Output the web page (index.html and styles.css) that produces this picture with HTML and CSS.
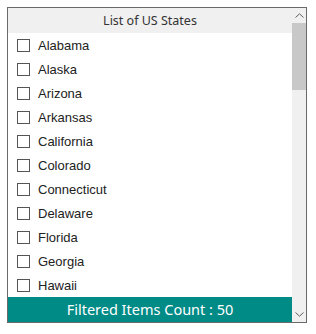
FILE: index.html
```html
<!DOCTYPE html>
<html lang="en">
<head>
    <meta charset="UTF-8">
    <title>List of US States</title>
    <link rel="stylesheet" href="styles.css">
</head>
<body>

<div class="listbox">
    <div class="list-main">
        <div class="list-header">List of US States</div>
        <div class="list-items">
            <label class="item"><span class="check"></span>Alabama</label>
            <label class="item"><span class="check"></span>Alaska</label>
            <label class="item"><span class="check"></span>Arizona</label>
            <label class="item"><span class="check"></span>Arkansas</label>
            <label class="item"><span class="check"></span>California</label>
            <label class="item"><span class="check"></span>Colorado</label>
            <label class="item"><span class="check"></span>Connecticut</label>
            <label class="item"><span class="check"></span>Delaware</label>
            <label class="item"><span class="check"></span>Florida</label>
            <label class="item"><span class="check"></span>Georgia</label>
            <label class="item"><span class="check"></span>Hawaii</label>
        </div>
        <div class="list-footer">Filtered Items Count : 50</div>
    </div>
    <div class="scrollbar">
        <div class="scroll-btn">
            <svg width="9" height="5" viewBox="0 0 9 5"><path d="M0.5 4.5 L4.5 0.8 L8.5 4.5" fill="none" stroke="#606060" stroke-width="1"/></svg>
        </div>
        <div class="scroll-track">
            <div class="scroll-thumb"></div>
        </div>
        <div class="scroll-btn">
            <svg width="9" height="5" viewBox="0 0 9 5"><path d="M0.5 0.5 L4.5 4.2 L8.5 0.5" fill="none" stroke="#606060" stroke-width="1"/></svg>
        </div>
    </div>
</div>

</body>
</html>
```

FILE: styles.css
```css
html,
body {
    margin: 0;
    background-color: #fff;
}
body {
    padding: 7px;
}
.listbox {
    display: flex;
    width: 298px;
    height: 314px;
    border: 1px solid #6a6a6a;
    background-color: #fff;
}
.list-main {
    flex: 1;
    display: flex;
    flex-direction: column;
}
.list-header {
    height: 25px;
    line-height: 25px;
    background-color: #f0f0f0;
    color: #333;
    text-align: center;
    font-family: "Noto Sans", sans-serif;
    font-size: 12.5px;
}
.list-items {
    flex: 1;
    overflow: hidden;
}
.item {
    display: flex;
    align-items: center;
    height: 24px;
    padding-left: 9px;
    font-family: "Liberation Sans", Arial, sans-serif;
    font-size: 13px;
    color: #222;
}
.check {
    width: 11px;
    height: 11px;
    border: 1px solid #555;
    margin-right: 8px;
    background-color: #fff;
}
.list-footer {
    height: 25px;
    line-height: 25px;
    background-color: #008b87;
    color: #fff;
    text-align: center;
    font-family: "Noto Sans", sans-serif;
    font-size: 14.5px;
}
.scrollbar {
    width: 14px;
    display: flex;
    flex-direction: column;
    background-color: #f0f0f0;
}
.scroll-btn {
    height: 15px;
    display: flex;
    align-items: center;
    justify-content: center;
}
.scroll-track {
    flex: 1;
}
.scroll-thumb {
    height: 67px;
    background-color: #c8c8c8;
}
```
